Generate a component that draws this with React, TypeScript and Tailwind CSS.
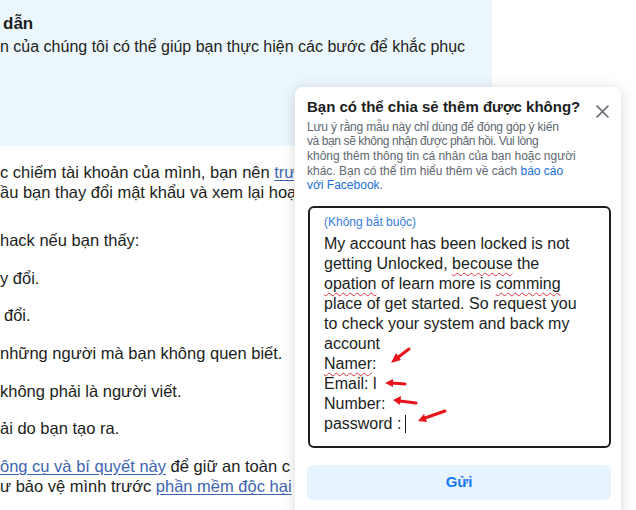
import React from 'react';

const Link: React.FC<{ children: React.ReactNode }> = ({ children }) => (
  <span className="text-[#3e64b0] underline underline-offset-2">{children}</span>
);

const Typo: React.FC<{ children: React.ReactNode }> = ({ children }) => (
  <span className="underline decoration-wavy decoration-[#e0323c] decoration-1 underline-offset-[3px]">{children}</span>
);

const items = [
  { text: 'y đổi.', pad: 'pl-0' },
  { text: 'đổi.', pad: 'pl-[4px]' },
  { text: 'những người mà bạn không quen biết.', pad: 'pl-0' },
  { text: 'không phải là người viết.', pad: 'pl-0' },
  { text: 'ải do bạn tạo ra.', pad: 'pl-0' },
];

const Arrows = () => (
  <svg className="absolute inset-0 pointer-events-none" width="636" height="510" viewBox="0 0 636 510">
    <g stroke="#e8141c" strokeWidth="3" strokeLinecap="round" fill="#e8141c">
      <line x1="409" y1="349" x2="397" y2="358" />
      <polygon points="391,363 396,353 401,360" stroke="none" />
      <line x1="405" y1="384" x2="392" y2="383" />
      <polygon points="385,383 393,379 393,387" stroke="none" />
      <line x1="416" y1="403" x2="400" y2="401" />
      <polygon points="393,400 401,396 400,405" stroke="none" />
      <line x1="445" y1="411" x2="425" y2="418" />
      <polygon points="418,421 424,414 427,422" stroke="none" />
    </g>
  </svg>
);

export default function App() {
  return (
    <div className="relative w-[636px] h-[510px] overflow-hidden bg-white font-['Liberation_Sans',Arial,sans-serif] text-[#1c1e21]">
      {/* Article behind the dialog */}
      <div className="w-[492px] h-[146px] bg-[#ecf7fd] pt-[14px] whitespace-nowrap">
        <div className="pl-[3px] text-[17px] font-bold leading-[20px]">dẫn</div>
        <div className="mt-[3px] text-[16px] leading-[20px]">
          n của chúng tôi có thể giúp bạn thực hiện các bước để khắc phục
        </div>
      </div>

      <div className="w-[294px] overflow-hidden mt-[16px] text-[16.5px] leading-[20px] whitespace-nowrap">
        <div>
          c chiếm tài khoản của mình, bạn nên <Link>trư</Link>
        </div>
        <div>ầu bạn thay đổi mật khẩu và xem lại hoạ</div>

        <div className="mt-[28px] flex flex-col gap-[17.7px]">
          <div>hack nếu bạn thấy:</div>
          {items.map((it, idx) => (
            <div key={idx} className={it.pad}>
              {it.text}
            </div>
          ))}
          <div>
            <div>
              <Link>ông cụ và bí quyết này</Link> để giữ an toàn c
            </div>
            <div>
              ư bảo vệ mình trước <Link>phần mềm độc hại</Link>
            </div>
          </div>
        </div>
      </div>

      {/* Feedback dialog */}
      <div className="absolute left-[295px] top-[87px] w-[326px] h-[440px] bg-white rounded-[8px] shadow-[0_2px_14px_rgba(0,0,0,0.16)] pl-[12px] pr-[10px] pt-[11px]">
        <div className="flex items-start justify-between">
          <div className="text-[15px] font-bold leading-[18px] text-[#1c1e21]">
            Bạn có thể chia sẻ thêm được không?
          </div>
          <svg className="mt-[7px] mr-[2px]" width="13" height="13" viewBox="0 0 13 13">
            <path d="M1 1 L12 12 M12 1 L1 12" stroke="#606770" strokeWidth="1.6" strokeLinecap="round" />
          </svg>
        </div>
        <p className="mt-[1.5px] text-[12px] leading-[14.7px] text-[#606770]">
          <span className="tracking-[-0.2px]">Lưu ý rằng mẫu này chỉ dùng để đóng góp ý kiến</span>
          <br />
          <span className="tracking-[-0.4px]">và bạn sẽ không nhận được phản hồi. Vui lòng</span>
          <br />
          không thêm thông tin cá nhân của bạn hoặc người
          <br />
          khác. Bạn có thể tìm hiểu thêm về cách <span className="text-[#216fdb]">báo cáo</span>
          <br />
          <span className="text-[#216fdb]">với Facebook</span>.
        </p>

        <div className="mt-[13px] ml-[1px] h-[242px] border-2 border-[#1c1e21] rounded-[6px] pl-[14px] pt-[7px]">
          <div className="text-[12px] leading-[14px] text-[#3a7de0]">(Không bắt buộc)</div>
          <div className="mt-[5px] text-[16px] leading-[20px] text-[#1c1e21]">
            <div>My account has been locked is not</div>
            <div>
              getting Unlocked, <Typo>becouse</Typo> the
            </div>
            <div>
              <Typo>opation</Typo> of learn more is <Typo>comming</Typo>
            </div>
            <div>place of get started. So request you</div>
            <div>to check your system and back my</div>
            <div>account</div>
            <div>
              <Typo>Namer</Typo>:
            </div>
            <div>Email: l</div>
            <div>Number:</div>
            <div className="flex items-center">
              password :<span className="ml-[4px] inline-block w-[1px] h-[18px] bg-[#1c1e21]" />
            </div>
          </div>
        </div>

        <button className="mt-[17px] w-full h-[35px] rounded-[6px] bg-[#e7f3ff] text-[15px] font-bold text-[#1877f2]">
          Gửi
        </button>
      </div>

      <Arrows />
    </div>
  );
}
